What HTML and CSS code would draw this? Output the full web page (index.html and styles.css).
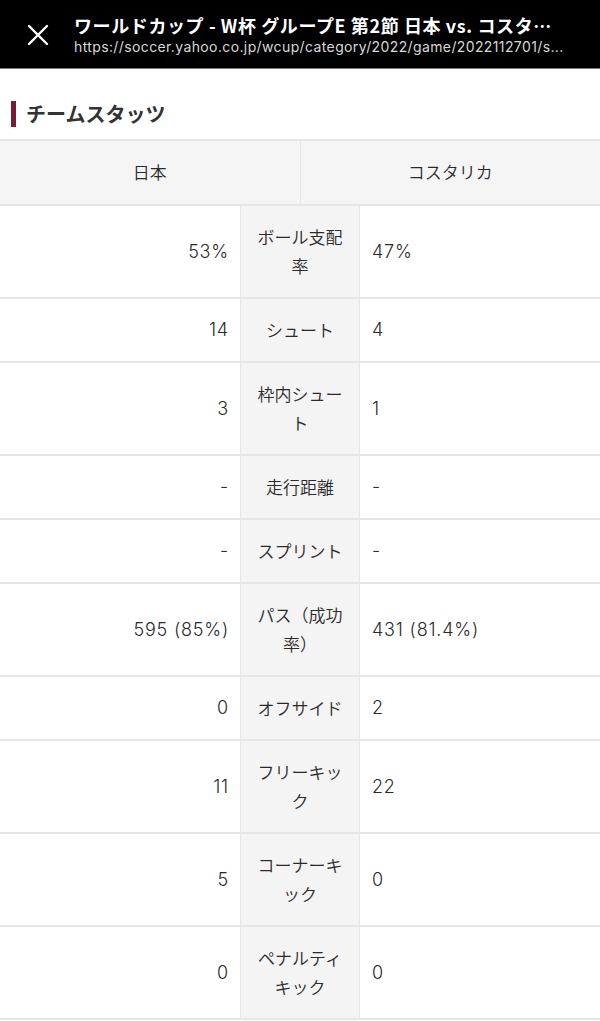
FILE: index.html
```html
<!DOCTYPE html>
<html lang="ja">
<head>
<meta charset="utf-8">
<link rel="stylesheet" href="styles.css">
</head>
<body>
<header class="topbar">
  <div class="close">
    <svg width="22" height="22" viewBox="0 0 22 22"><path d="M2 2 L20 20 M20 2 L2 20" stroke="#fff" stroke-width="2.4" stroke-linecap="round" fill="none"/></svg>
  </div>
  <div class="titles">
    <div class="title">ワールドカップ - W杯 グループE 第2節 日本 vs. コスタ…</div>
    <div class="url">https://soccer.yahoo.co.jp/wcup/category/2022/game/2022112701/s...</div>
  </div>
</header>
<main>
  <h2 class="section-title">チームスタッツ</h2>
  <div class="stats">
    <div class="teams">
      <div class="team">日本</div>
      <div class="team">コスタリカ</div>
    </div>
    <div class="row"><div class="l">53%</div><div class="m">ボール支配率</div><div class="r">47%</div></div>
    <div class="row"><div class="l">14</div><div class="m">シュート</div><div class="r">4</div></div>
    <div class="row"><div class="l">3</div><div class="m">枠内シュート</div><div class="r">1</div></div>
    <div class="row"><div class="l">-</div><div class="m">走行距離</div><div class="r">-</div></div>
    <div class="row"><div class="l">-</div><div class="m">スプリント</div><div class="r">-</div></div>
    <div class="row"><div class="l">595 (85%)</div><div class="m">パス（成功率）</div><div class="r">431 (81.4%)</div></div>
    <div class="row"><div class="l">0</div><div class="m">オフサイド</div><div class="r">2</div></div>
    <div class="row"><div class="l">11</div><div class="m">フリーキック</div><div class="r">22</div></div>
    <div class="row"><div class="l">5</div><div class="m">コーナーキック</div><div class="r">0</div></div>
    <div class="row"><div class="l">0</div><div class="m">ペナルティキック</div><div class="r">0</div></div>
  </div>
</main>
</body>
</html>
```

FILE: styles.css
```css
* { box-sizing: border-box; }
html, body { margin: 0; padding: 0; background: #fff; }
body {
  font-family: "Noto Sans CJK JP", "Noto Sans", sans-serif;
  color: #333;
}
.topbar {
  height: 69px;
  background: #000;
  border-bottom: 1px solid #7a7a7a;
  display: flex;
  align-items: center;
}
.close {
  width: 74px;
  display: flex;
  justify-content: center;
  padding-left: 2px;
  padding-top: 2px;
}
.close svg { display: block; }
.titles {
  width: 510px;
  display: flex;
  flex-direction: column;
  gap: 1px;
  padding-top: 2px;
}
.title {
  color: #fff;
  font-weight: 700;
  font-size: 18px;
  line-height: 23px;
  letter-spacing: 0.6px;
  white-space: nowrap;
}
.url {
  color: #d8d8d8;
  font-family: "Inter", "Noto Sans", sans-serif;
  font-size: 14px;
  line-height: 18px;
  letter-spacing: 0.38px;
  white-space: nowrap;
}
.section-title {
  margin: 32px 0 12px 11px;
  padding-left: 10px;
  border-left: 5px solid #7b1a33;
  font-size: 20px;
  font-weight: 700;
  line-height: 26px;
  color: #333;
}
.stats {
  border-top: 2px solid #e6e6e6;
  font-size: 17px;
  line-height: 29px;
  font-weight: 350;
  color: #2a2a2a;
}
.teams {
  display: flex;
  background: #f5f5f5;
  border-bottom: 2px solid #e6e6e6;
}
.team {
  flex: 1;
  text-align: center;
  padding: 16px 0 18px;
}
.team + .team { border-left: 1px solid #e6e6e6; }
.row {
  display: grid;
  grid-template-columns: 240px 120px 240px;
  border-bottom: 2px solid #e6e6e6;
}
.row .l, .row .r {
  display: flex;
  align-items: center;
  padding: 16px 12px 17px;
  font-family: "Inter", "Noto Sans CJK JP", sans-serif;
  font-size: 18px;
  font-weight: 300;
  letter-spacing: 0.8px;
}
.row .l { justify-content: flex-end; padding-right: 11px; }
.row .m {
  background: #f4f4f4;
  border-left: 1px solid #e6e6e6;
  border-right: 1px solid #e6e6e6;
  text-align: center;
  padding: 16px 10px 17px;
  display: flex;
  align-items: center;
  justify-content: center;
}
```
